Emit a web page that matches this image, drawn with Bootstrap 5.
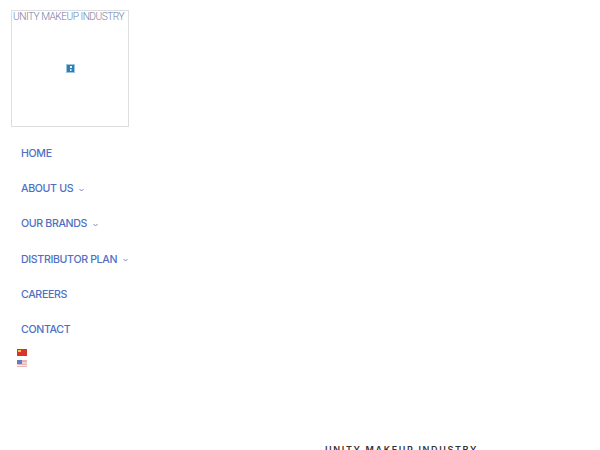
<!doctype html>
<html lang="en"><head><meta charset="utf-8"><title>Unity Makeup Industry</title>
<link href="https://cdn.jsdelivr.net/npm/bootstrap@5.3.0/dist/css/bootstrap.min.css" rel="stylesheet">
<style>
html,body{height:450px;overflow:hidden;background:#fff}
.side-col{width:140px;padding:10px 0 0 11px;flex:none}
.logo-box{width:118px;height:117px;border:1px solid #dedede;position:relative}
.logo-text{font:300 10.2px/11px Roboto,sans-serif;letter-spacing:-.52px;color:#6f7fa8;white-space:nowrap;padding-left:1px}
.logo-pic{position:absolute;left:54px;top:53px;display:block}
.site-nav{margin-top:10px;padding-left:10px}
.site-nav a{height:35.1px;font:500 10.6px/1 Inter,sans-serif;letter-spacing:-.34px;color:#4f6fc4;text-decoration:none;white-space:nowrap;display:flex;align-items:center;gap:6px}
.flags{padding-left:6px;margin-top:1px}
.flag-gap{margin-top:4px}
.main-col{padding:443px 0 0 185px;flex:1}
.main-title{font:600 9px/14px Inter,sans-serif;letter-spacing:1.65px;color:#333;white-space:nowrap;margin:0}
</style></head><body>
<div class="d-flex">
<div class="side-col">
<div class="logo-box">
<div class="logo-text">UNITY MAKEUP INDUSTRY</div>
<svg class="logo-pic" width="9" height="9" viewBox="0 0 9 9"><rect width="9" height="9" fill="#2f7fb5"/><rect x=".5" y=".5" width="8" height="8" fill="none" stroke="#9cc6de"/><rect x="4" y="2" width="2" height="2" fill="#e8f2f8"/><rect x="4" y="5" width="1.5" height="2" fill="#dcebf4"/></svg>
</div>
<nav class="site-nav d-flex flex-column">
<a href="#">HOME</a>
<a href="#">ABOUT US <svg width="5" height="4" viewBox="0 0 5 4"><path d="M.5 1l2 2 2-2" fill="none" stroke="#6a7db2" stroke-width=".9"/></svg></a>
<a href="#">OUR BRANDS <svg width="5" height="4" viewBox="0 0 5 4"><path d="M.5 1l2 2 2-2" fill="none" stroke="#6a7db2" stroke-width=".9"/></svg></a>
<a href="#">DISTRIBUTOR PLAN <svg width="5" height="4" viewBox="0 0 5 4"><path d="M.5 1l2 2 2-2" fill="none" stroke="#6a7db2" stroke-width=".9"/></svg></a>
<a href="#">CAREERS</a>
<a href="#">CONTACT</a>
</nav>
<div class="flags d-flex flex-column">
<svg width="10" height="7" viewBox="0 0 10 7" class="d-block"><rect width="10" height="7" fill="#d8342a"/><rect x="1" y="1" width="3" height="2" fill="#f2c14a"/></svg>
<svg width="10" height="7" viewBox="0 0 10 7" class="d-block flag-gap"><rect width="10" height="7" fill="#e6b5b8"/><rect y="5" width="10" height="1" fill="#f1f1f4"/><rect y="2.5" x="5" width="5" height="1" fill="#f1f1f4"/><rect width="5" height="4" fill="#5b7fc4"/></svg>
</div>
</div>
<div class="main-col"><h1 class="main-title">UNITY MAKEUP INDUSTRY</h1></div>
</div>
<script src="https://cdn.jsdelivr.net/npm/bootstrap@5.3.0/dist/js/bootstrap.bundle.min.js"></script>
</body></html>
